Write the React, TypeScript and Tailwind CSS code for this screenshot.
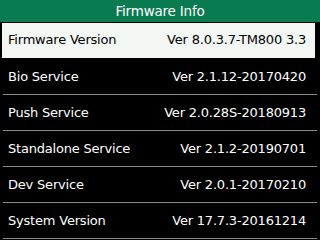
import React from "react";

const rows = [
    { label: "Firmware Version", value: "Ver 8.0.3.7-TM800 3.3" },
    { label: "Bio Service", value: "Ver 2.1.12-20170420" },
    { label: "Push Service", value: "Ver 2.0.28S-20180913" },
    { label: "Standalone Service", value: "Ver 2.1.2-20190701" },
    { label: "Dev Service", value: "Ver 2.0.1-20170210" },
    { label: "System Version", value: "Ver 17.7.3-20161214" },
];

export default function App() {
    return (
        <div className="w-[320px] h-[240px] bg-black overflow-hidden font-['DejaVu_Sans',sans-serif] text-[13px] tracking-[-0.2px]">
            <div className="h-[22px] bg-[#0a7a50] text-white text-[13.5px] flex items-center justify-center pt-px">Firmware Info</div>
            <div className="mt-px">
                {rows.map((row, i) => (
                    <div
                        key={row.label}
                        className={
                            i === 0
                                ? "ml-[2px] w-[313px] h-[36px] border-b border-black bg-[#f3f7f3] text-black flex items-center justify-between pl-[6px] pr-[9px] pb-[2px]"
                                : "ml-[3px] w-[314px] h-[36px] border-b border-[#8a8a8a] text-white flex items-center justify-between pl-[5px] pr-[11px]"
                        }
                    >
                        <span>{row.label}</span>
                        <span>{row.value}</span>
                    </div>
                ))}
            </div>
        </div>
    );
}
